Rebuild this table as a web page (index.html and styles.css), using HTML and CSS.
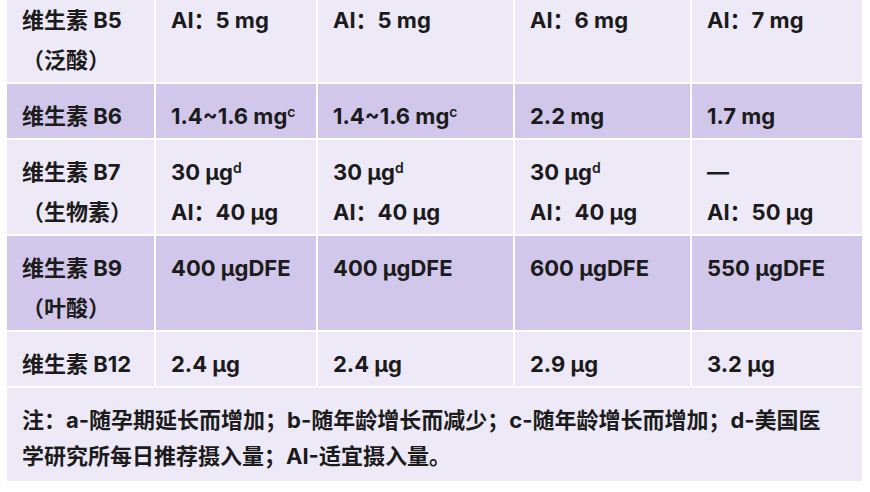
FILE: index.html
```html
<!DOCTYPE html>
<html lang="zh-CN">
<head>
<meta charset="utf-8">
<title>维生素 B 族推荐摄入量</title>
<link rel="stylesheet" href="styles.css">
</head>
<body>
<table class="vt">
  <colgroup>
    <col class="c1"><col class="c2"><col class="c3"><col class="c4"><col class="c5">
  </colgroup>
  <tbody>
    <tr class="light">
      <td>维生素 B5<br>（泛酸）</td>
      <td>AI：5 mg</td>
      <td>AI：5 mg</td>
      <td>AI：6 mg</td>
      <td>AI：7 mg</td>
    </tr>
    <tr class="dark">
      <td>维生素 B6</td>
      <td>1.4~1.6 mg<sup>c</sup></td>
      <td>1.4~1.6 mg<sup>c</sup></td>
      <td>2.2 mg</td>
      <td>1.7 mg</td>
    </tr>
    <tr class="light">
      <td>维生素 B7<br>（生物素）</td>
      <td>30 µg<sup>d</sup><br>AI：40 µg</td>
      <td>30 µg<sup>d</sup><br>AI：40 µg</td>
      <td>30 µg<sup>d</sup><br>AI：40 µg</td>
      <td>—<br>AI：50 µg</td>
    </tr>
    <tr class="dark">
      <td>维生素 B9<br>（叶酸）</td>
      <td>400 µgDFE</td>
      <td>400 µgDFE</td>
      <td>600 µgDFE</td>
      <td>550 µgDFE</td>
    </tr>
    <tr class="light">
      <td>维生素 B12</td>
      <td>2.4 µg</td>
      <td>2.4 µg</td>
      <td>2.9 µg</td>
      <td>3.2 µg</td>
    </tr>
    <tr class="light note">
      <td colspan="5">注：a-随孕期延长而增加；b-随年龄增长而减少；c-随年龄增长而增加；d-美国医<br>学研究所每日推荐摄入量；AI-适宜摄入量。</td>
    </tr>
  </tbody>
</table>
</body>
</html>
```
FILE: styles.css
```css
html, body {
  margin: 0;
  padding: 0;
  background: #ffffff;
}

body {
  font-family: "Inter", "Noto Sans CJK SC", sans-serif;
  font-weight: 700;
  font-size: 22px;
  color: #1b1b1b;
  overflow: hidden;
}

.vt {
  margin: -14px 0 0 5px;
  width: 859px;
  table-layout: fixed;
  border-collapse: separate;
  border-spacing: 2px;
  background: #ffffff;
}

.c1 { width: 147px; }
.c2 { width: 160px; }
.c3 { width: 195px; }
.c4 { width: 175px; }
.c5 { width: 170px; }

.vt td {
  padding: 12px 6px 2px 15px;
  line-height: 40px;
  vertical-align: top;
  white-space: nowrap;
}

.light td { background: #ede9f7; }
.dark td { background: #d1c7ea; }

.note td {
  padding: 14px 6px 7px 15px;
  line-height: 36px;
}

sup {
  font-size: 14px;
  font-weight: 600;
  line-height: 0;
  vertical-align: 7px;
}
```
